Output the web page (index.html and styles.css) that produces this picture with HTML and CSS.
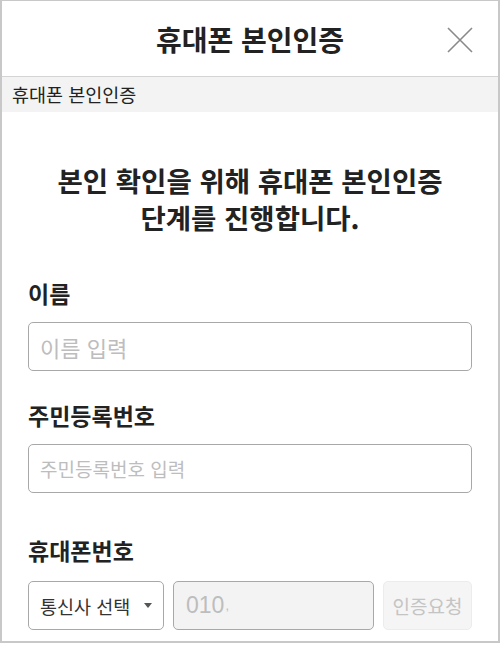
FILE: index.html
```html
<!DOCTYPE html>
<html lang="ko">
<head>
<meta charset="utf-8">
<title>휴대폰 본인인증</title>
<link rel="stylesheet" href="styles.css">
</head>
<body>
<div class="frame">
  <header class="top">
    <h1 class="title">휴대폰 본인인증</h1>
    <button class="close" aria-label="닫기">
      <svg width="26" height="26" viewBox="0 0 26 26"><path d="M1 1 L25 25 M25 1 L1 25" stroke="#8a8a8a" stroke-width="1.6" fill="none"/></svg>
    </button>
  </header>
  <div class="crumb">휴대폰 본인인증</div>
  <main class="content">
    <p class="lead">본인 확인을 위해 휴대폰 본인인증<br>단계를 진행합니다.</p>
    <label class="label first">이름</label>
    <div class="field"><span class="ph big">이름 입력</span></div>
    <label class="label">주민등록번호</label>
    <div class="field"><span class="ph">주민등록번호 입력</span></div>
    <label class="label third">휴대폰번호</label>
    <div class="row">
      <div class="select"><span>통신사 선택</span><span class="caret"></span></div>
      <div class="phone"><span class="num">010</span><span class="tick">,</span></div>
      <div class="req">인증요청</div>
    </div>
  </main>
</div>
</body>
</html>
```
FILE: styles.css
```css
* { box-sizing: border-box; }
html, body { margin: 0; padding: 0; background: #fff; }
body {
  font-family: "Noto Sans CJK KR", "Noto Sans", sans-serif;
  color: #222;
  width: 500px;
  height: 646px;
}
.frame {
  width: 500px;
  height: 643px;
  border: 2px solid #c8c8c8;
  border-top-width: 1px;
  overflow: hidden;
}
.top {
  height: 76px;
  border-bottom: 1px solid #d4d4d4;
  display: flex;
  align-items: center;
  justify-content: center;
  position: relative;
}
.title {
  margin: 0;
  font-size: 28px;
  font-weight: 700;
  line-height: 1;
  color: #222;
}
.close {
  position: absolute;
  right: 25px;
  top: 26px;
  width: 26px;
  height: 26px;
  padding: 0;
  border: 0;
  background: none;
}
.close svg { display: block; }
.crumb {
  height: 35px;
  background: #f3f3f3;
  font-size: 18.5px;
  line-height: 35px;
  padding-left: 10px;
  color: #222;
}
.content {
  padding: 0 26px;
}
.lead {
  margin: 50px 0 0;
  text-align: center;
  font-size: 27.5px;
  font-weight: 700;
  line-height: 37px;
  color: #222;
}
.label {
  display: block;
  font-size: 23px;
  font-weight: 700;
  line-height: 28px;
  margin-top: 30px;
  margin-bottom: 15px;
  color: #222;
}
.label.first { margin-top: 43px; }
.label.third { margin-top: 43px; margin-bottom: 17px; }
.field {
  height: 49px;
  border: 1px solid #a8a8a8;
  border-radius: 5px;
  display: flex;
  align-items: center;
  padding-left: 11px;
}
.ph { color: #bdbdbd; font-size: 19px; }
.ph.big { font-size: 22px; }
.row {
  display: flex;
  gap: 9px;
  height: 49px;
}
.select {
  width: 136px;
  border: 1px solid #a8a8a8;
  border-radius: 5px;
  display: flex;
  align-items: center;
  justify-content: space-between;
  padding: 0 11px 0 11px;
  font-size: 18.5px;
  color: #333;
}
.caret {
  width: 0; height: 0;
  border-left: 4px solid transparent;
  border-right: 4px solid transparent;
  border-top: 5px solid #555;
}
.phone {
  width: 201px;
  border: 1px solid #a8a8a8;
  border-radius: 5px;
  background: #f3f3f3;
  display: flex;
  align-items: center;
  padding-left: 12px;
  color: #bdbdbd;
  font-family: "Liberation Sans", "Noto Sans CJK KR", sans-serif;
  font-size: 23px;
}
.tick { font-size: 13px; margin-left: 1px; }
.req {
  width: 89px;
  border: 1px solid #ececec;
  border-radius: 5px;
  background: #f5f5f5;
  color: #c4c4c4;
  font-size: 19px;
  display: flex;
  align-items: center;
  justify-content: center;
}
```
